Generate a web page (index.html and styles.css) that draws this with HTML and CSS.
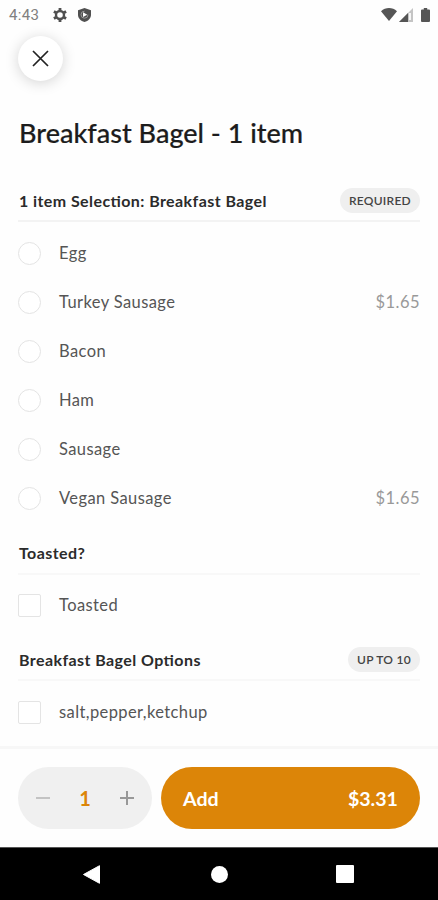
FILE: index.html
```html
<!DOCTYPE html>
<html lang="en">
<head>
<meta charset="utf-8">
<title>Breakfast Bagel</title>
<link rel="stylesheet" href="styles.css">
</head>
<body>
<div class="screen">
  <header class="status">
    <span class="time">4:43</span>
    <svg class="gear" width="14" height="14" viewBox="0 0 14 14"><circle cx="7" cy="7" r="4" fill="none" stroke="#505050" stroke-width="2.400"/><path d="M7 0v2.600M7 11.400V14M.9 3.500l2.300 1.300M10.800 9.200l2.300 1.300M.9 10.500l2.300-1.300M10.800 4.800l2.300-1.300" stroke="#505050" stroke-width="2.800"/></svg>
    <svg class="shield" width="13" height="14" viewBox="0 0 13 14"><path fill="#505050" d="M6.500 0 13 2.300v4.500c0 3.400-2.700 6.200-6.500 7.200C2.700 13 0 10.200 0 6.800V2.300z"/><path d="M6.500 3.200A3.500 3.500 0 1 0 10 6.700" fill="none" stroke="#999" stroke-width="1"/><path fill="#fff" d="M5 4.300 9.300 6.700 5 9.100z"/></svg>
    <span class="spacer"></span>
    <svg width="16" height="13" viewBox="0 0 16 13"><path fill="#555" d="M0 3.200C4.500-1 11.500-1 16 3.200L8 13z"/></svg>
    <svg class="signal" width="14" height="14" viewBox="0 0 14 14"><path fill="#c4c4c4" d="M14 0v14H0z"/><path fill="#555" d="M9 5v9H0z"/><path fill="#f5f5f5" d="M10 5h2v7h-2z"/></svg>
    <svg class="battery" width="9" height="14" viewBox="0 0 9 14"><path fill="#555" d="M2.800 0h3.400v1.500H8q1 0 1 1V13q0 1-1 1H1q-1 0-1-1V2.500q0-1 1-1h1.800z"/></svg>
  </header>

  <main class="content">
    <button class="close" aria-label="Close"><svg width="17" height="17" viewBox="0 0 17 17"><path d="m1 1 15 15M16 1 1 16" stroke="#222" stroke-width="1.700" fill="none"/></svg></button>
    <h1>Breakfast Bagel - 1 item</h1>

    <section>
      <div class="heading"><h2>1 item Selection: Breakfast Bagel</h2><span class="tag required">REQUIRED</span></div>
      <ul>
        <li><i class="radio"></i><span>Egg</span></li>
        <li><i class="radio"></i><span>Turkey Sausage</span><b>$1.65</b></li>
        <li><i class="radio"></i><span>Bacon</span></li>
        <li><i class="radio"></i><span>Ham</span></li>
        <li><i class="radio"></i><span>Sausage</span></li>
        <li><i class="radio"></i><span>Vegan Sausage</span><b>$1.65</b></li>
      </ul>
    </section>

    <section class="light">
      <div class="heading"><h2>Toasted?</h2></div>
      <ul><li><i class="check"></i><span>Toasted</span></li></ul>
    </section>

    <section class="light last">
      <div class="heading"><h2>Breakfast Bagel Options</h2><span class="tag limit">UP TO 10</span></div>
      <ul><li><i class="check"></i><span>salt,pepper,ketchup</span></li></ul>
    </section>
  </main>

  <footer class="order">
    <div class="stepper">
      <svg width="14" height="14" viewBox="0 0 14 14"><path d="M0 7h14" stroke="#b8b8b8" stroke-width="1.600"/></svg>
      <span>1</span>
      <svg width="14" height="14" viewBox="0 0 14 14"><path d="M0 7h14M7 0v14" stroke="#989898" stroke-width="2"/></svg>
    </div>
    <button class="add"><span>Add</span><span>$3.31</span></button>
  </footer>

  <nav class="system">
    <svg width="17" height="19" viewBox="0 0 17 19"><path fill="#fff" d="M16.500.7v17.600L.5 9.500z" stroke="#fff" stroke-linejoin="round"/></svg>
    <svg width="17" height="17" viewBox="0 0 17 17"><circle cx="8.500" cy="8.500" r="8.500" fill="#fff"/></svg>
    <svg class="recent" width="18" height="18" viewBox="0 0 18 18"><rect width="18" height="18" rx="1" fill="#fff"/></svg>
  </nav>
</div>
</body>
</html>
```
FILE: styles.css
```css
* { box-sizing: border-box; }
body { margin: 0; background: #fefefe; font-family: Lato, "Liberation Sans", sans-serif; color: #222; }
h1, h2, ul { margin: 0; padding: 0; }
button { border: 0; font: inherit; }
svg { display: block; flex: none; }

.screen { width: 438px; height: 900px; display: flex; flex-direction: column; overflow: hidden; font-feature-settings: "liga" 1; }

.status { height: 29px; flex: none; display: flex; align-items: center; padding: 0 8px 0 9px; }
.time { width: 44px; font: 400 15px/20px Roboto, sans-serif; color: #808080; letter-spacing: 0.35px; }
.shield { margin-left: 11px; }
.spacer { flex: 1; }
.signal { margin-left: 2px; }
.battery { margin-left: 8px; }

.content { flex: 1; min-height: 0; padding: 7px 18px 0; }
.close { width: 45px; height: 45px; padding: 0; border-radius: 50%; background: #fff; box-shadow: 0 2px 14px rgba(0, 0, 0, 0.17); display: flex; align-items: center; justify-content: center; }
h1 { margin-top: 34px; padding-left: 1px; font-size: 27px; line-height: 36px; font-weight: 500; white-space: nowrap; color: #1c1c1c; -webkit-text-stroke: 0.2px #1c1c1c; }

section:first-of-type { margin-top: 34px; }
.heading { display: flex; justify-content: space-between; align-items: center; border-bottom: 2px solid #f3f3f3; }
section:first-of-type .heading { height: 37px; padding-bottom: 5px; }
section:first-of-type h2 { padding-top: 1px; }
h2 { padding-left: 1px; font-size: 16px; line-height: 20px; font-weight: 700; color: #2b2b2b; letter-spacing: 0.42px; white-space: nowrap; }
.tag { height: 25px; border-radius: 13px; background: #efefef; display: flex; align-items: center; justify-content: center; font-size: 12px; font-weight: 600; color: #444; letter-spacing: 0.25px; }
.required { width: 80px; }
.limit { width: 72px; }
ul { list-style: none; padding-top: 7px; }
li { height: 49px; display: flex; align-items: center; font-size: 16.500px; letter-spacing: 0.4px; color: #555; }
li span { margin-left: 18px; padding-bottom: 2px; }
li b { margin-left: auto; padding-bottom: 2px; font-weight: 400; color: #999; letter-spacing: 0.45px; }
.radio, .check { width: 23px; height: 23px; flex: none; border: 1.500px solid #e4e4e4; background: #fff; }
.radio { border-radius: 50%; }
.check { border-radius: 2px; }
.light .heading { height: 52px; padding: 12px 0 2px; border-color: #f8f8f8; }
.light.last .heading { height: 51px; }
.light ul { padding-top: 6px; }
.light.last ul { padding-top: 7px; }

.order { height: 101px; flex: none; border-top: 3px solid #f7f7f7; padding: 18px 18px 0; display: flex; gap: 9px; }
.stepper { width: 134px; height: 62px; border-radius: 31px; background: #f0f0f0; padding: 0 18px; display: flex; align-items: center; justify-content: space-between; font-size: 20px; font-weight: 700; color: #dc8508; }
.add { flex: 1; height: 62px; border-radius: 31px; background: #dc8508; color: #fff; padding: 0 22px; display: flex; align-items: center; justify-content: space-between; font-size: 19.600px; font-weight: 700; }

.system { height: 53px; flex: none; background: #000; border-top: 1px solid #555; display: grid; grid-template-columns: 183px 72px 180px; justify-items: center; align-items: center; }
```
